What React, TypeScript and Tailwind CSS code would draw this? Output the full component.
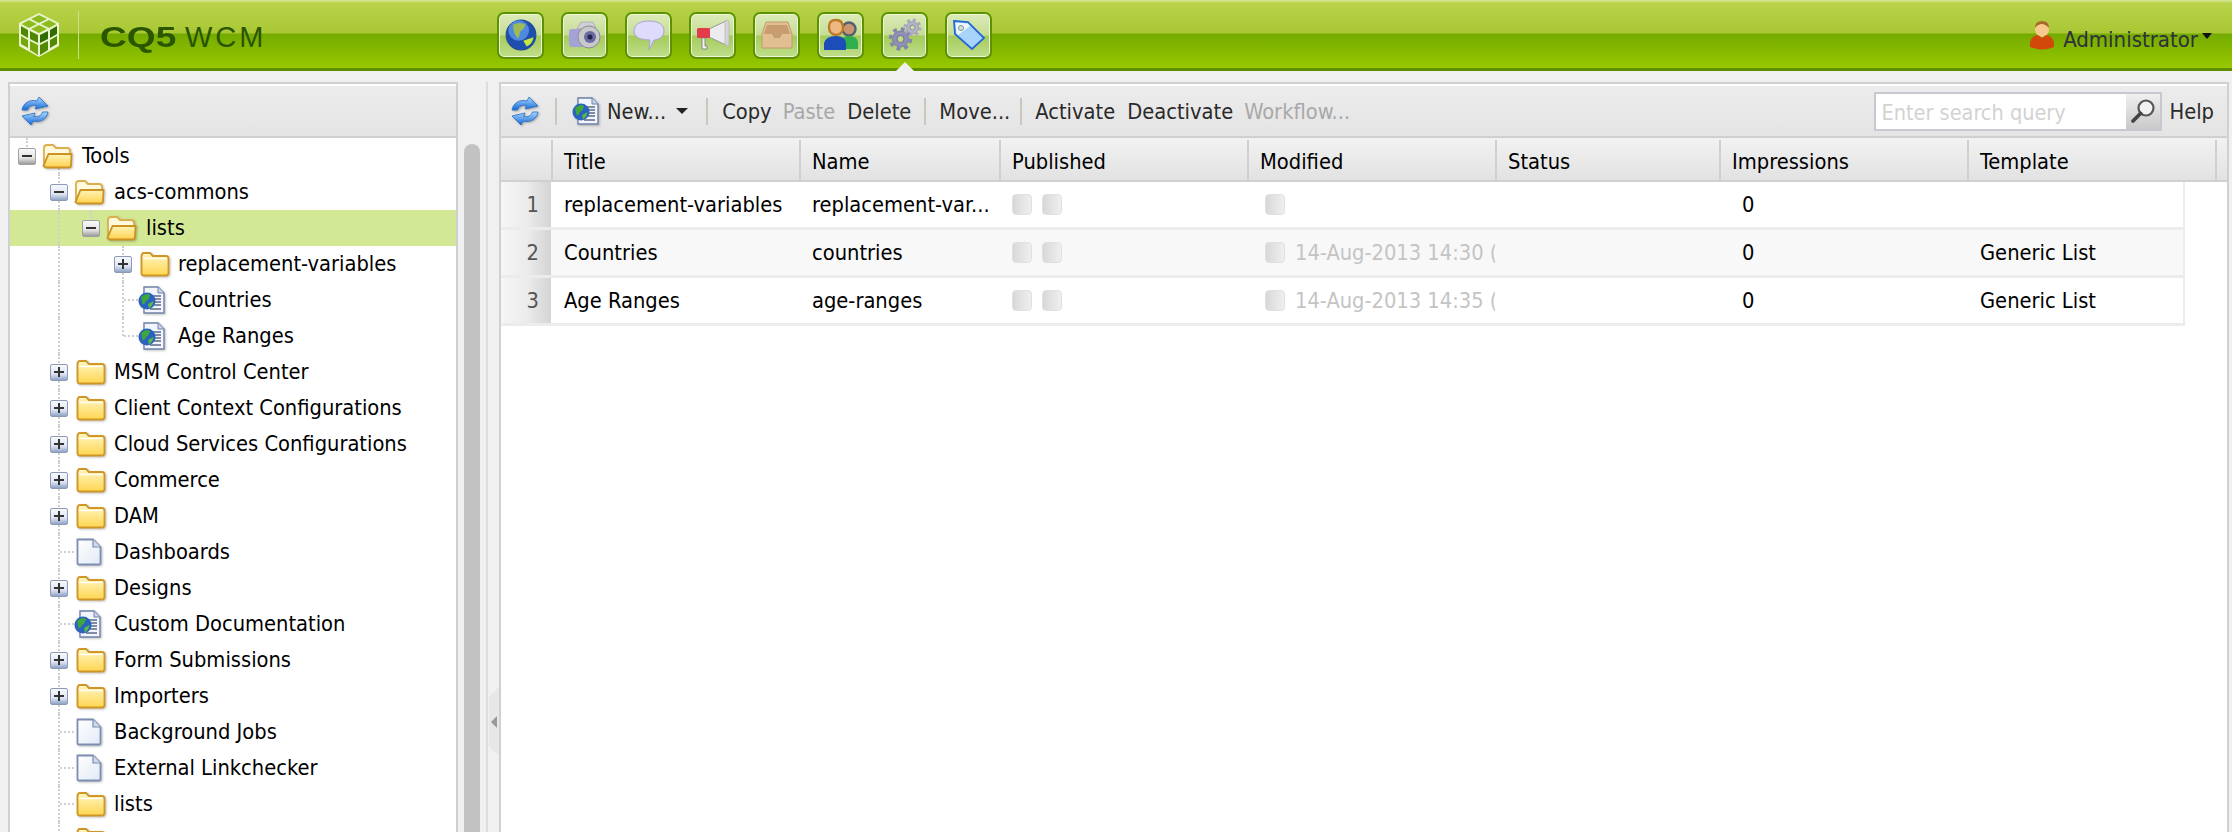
import React from "react";

const font = "font-['DejaVu_Sans_Condensed','Liberation_Sans',Arial,sans-serif]";
const softShadow = "drop-shadow-[1px_1px_1px_rgba(0,0,0,0.25)]";

function Refresh() {
  return (
    <svg width="30" height="30" viewBox="0 0 30 30" className="shrink-0 drop-shadow-[1px_1px_1px_rgba(0,0,0,0.3)]">
      <defs>
        <linearGradient id="rf" x1="0" y1="0" x2="0" y2="1">
          <stop offset="0" stopColor="#a8d8ff" />
          <stop offset="1" stopColor="#1569d8" />
        </linearGradient>
      </defs>
      <path d="M2 14 C3 7 10 3 17 5 L19 1 L28 10 L15 13 L16.500 9.500 C12 8.500 8.500 10.500 7.500 14 Z" fill="url(#rf)" stroke="#2a6cc0" strokeWidth="0.800" />
      <path d="M28 16 C27 23 20 27 13 25 L11 29 L2 20 L15 17 L13.500 20.500 C18 21.500 21.500 19.500 22.500 16 Z" fill="url(#rf)" stroke="#2a6cc0" strokeWidth="0.800" />
    </svg>
  );
}

function Folder({ open = false }: { open?: boolean }) {
  if (open)
    return (
      <svg width="31" height="26" viewBox="0 0 31 26" className={`shrink-0 ${softShadow}`}>
        <defs>
          <linearGradient id="fo" x1="0" y1="0" x2="0" y2="1">
            <stop offset="0" stopColor="#fff4b8" />
            <stop offset="1" stopColor="#ffd24f" />
          </linearGradient>
        </defs>
        <path d="M2 20 V5 Q2 2 5 2 H11 L14 5 H25 Q28 5 28 8 V11 H8 Z" fill="#fff9de" stroke="#dcae4c" strokeWidth="1.800" />
        <path d="M1.500 23 L6.500 11 H29.500 L29 22 Q29 24.500 26.500 24.500 H4 Z" fill="url(#fo)" stroke="#cb9224" strokeWidth="1.800" />
      </svg>
    );
  return (
    <svg width="30" height="26" viewBox="0 0 30 26" className={`shrink-0 ${softShadow}`}>
      <defs>
        <linearGradient id="fc" x1="0" y1="0" x2="0" y2="1">
          <stop offset="0" stopColor="#fff6c4" />
          <stop offset="1" stopColor="#ffd650" />
        </linearGradient>
      </defs>
      <path d="M1.500 22 V5 Q1.500 2 4 2 H10 L13 5 H26 Q28.500 5 28.500 8 V22 Q28.500 24.500 26 24.500 H4 Q1.500 24.500 1.500 22 Z" fill="url(#fc)" stroke="#cf9626" strokeWidth="1.800" />
      <path d="M3 7.500 H27" stroke="#fffdf0" strokeWidth="1.500" />
    </svg>
  );
}

function Globe({ size = 28 }: { size?: number }) {
  return (
    <svg width={size} height={size} viewBox="0 0 28 28" className="shrink-0">
      <circle cx="14" cy="14" r="13" fill="#1f4fae" stroke="#234c95" />
      <circle cx="12" cy="10" r="9" fill="#4f8ae0" />
      <path d="M7 5 Q13 2 18 5 Q16 10 13 11 Q13 16 11 17 Q7 12 7 5 Z" fill="#9dbb55" />
      <path d="M16 19 L25 16 Q24 22 19 24 Z" fill="#c4e83f" />
    </svg>
  );
}

function PageGlobe() {
  return (
    <svg width="28" height="28" viewBox="0 0 28 28" className={`shrink-0 ${softShadow}`}>
      <path d="M6 1 H20 L26 7 V27 H6 Z" fill="#f2f5fb" stroke="#6f82a8" strokeWidth="1.400" />
      <path d="M20 1 V7 H26" fill="#c9d4e8" stroke="#6f82a8" />
      <path d="M15 10 H23 M15 13 H23 M16 16 H23 M16 19 H23 M12 23 H23" stroke="#5d6a84" strokeWidth="1.300" />
      <circle cx="9" cy="15" r="8.500" fill="#2a62bf" />
      <path d="M3 11 Q9 6 12 9 Q11 14 8 15 Q7 19 4.500 18 Z" fill="#3fa63c" />
      <path d="M10 18 L15.500 15 Q15 20 11 22.500 Z" fill="#58b948" />
    </svg>
  );
}

function PageIcon() {
  return (
    <svg width="26" height="28" viewBox="0 0 26 28" className={`shrink-0 ${softShadow}`}>
      <defs>
        <linearGradient id="pg" x1="0" y1="0" x2="1" y2="1">
          <stop offset="0" stopColor="#ffffff" />
          <stop offset="1" stopColor="#e2eaf6" />
        </linearGradient>
      </defs>
      <path d="M1.500 1.500 H17 L24.500 9 V25.500 Q24.500 26.500 23 26.500 H3 Q1.500 26.500 1.500 25.500 Z" fill="url(#pg)" stroke="#7d8eb2" strokeWidth="1.800" />
      <path d="M17 1.500 V9 H24.500" fill="#cfd9ec" stroke="#7d8eb2" strokeWidth="1.200" />
    </svg>
  );
}

function Toggle({ open, grey }: { open: boolean; grey?: boolean }) {
  return (
    <span className={`relative flex h-[17px] w-[18px] shrink-0 items-center justify-center rounded-[2px] border ${grey ? "border-[#a0a0a0] bg-[linear-gradient(#f8f8f8,#e4e4e4_60%,#9c9c9c)]" : "border-[#8e9bb5] bg-[linear-gradient(#f6f8fc,#dfe6f2_60%,#8fa3c6)]"}`}>
      <span className="absolute h-[2px] w-[10px] bg-[#333]" />
      {!open && <span className="absolute h-[10px] w-[2px] bg-[#333]" />}
    </span>
  );
}

type Row = { label: string; level: number; kind: "folder" | "open" | "page" | "web"; toggle?: "plus" | "minus" | "minusgrey"; sel?: boolean; guide?: "top" | "full" | "half"; };

const rows: Row[] = [
  { label: "Tools", level: 0, kind: "open", toggle: "minusgrey" },
  { label: "acs-commons", level: 1, kind: "open", toggle: "minus" },
  { label: "lists", level: 2, kind: "open", toggle: "minusgrey", sel: true },
  { label: "replacement-variables", level: 3, kind: "folder", toggle: "plus", guide: "full" },
  { label: "Countries", level: 3, kind: "web", guide: "full" },
  { label: "Age Ranges", level: 3, kind: "web", guide: "half" },
  { label: "MSM Control Center", level: 1, kind: "folder", toggle: "plus" },
  { label: "Client Context Configurations", level: 1, kind: "folder", toggle: "plus" },
  { label: "Cloud Services Configurations", level: 1, kind: "folder", toggle: "plus" },
  { label: "Commerce", level: 1, kind: "folder", toggle: "plus" },
  { label: "DAM", level: 1, kind: "folder", toggle: "plus" },
  { label: "Dashboards", level: 1, kind: "page" },
  { label: "Designs", level: 1, kind: "folder", toggle: "plus" },
  { label: "Custom Documentation", level: 1, kind: "web" },
  { label: "Form Submissions", level: 1, kind: "folder", toggle: "plus" },
  { label: "Importers", level: 1, kind: "folder", toggle: "plus" },
  { label: "Background Jobs", level: 1, kind: "page" },
  { label: "External Linkchecker", level: 1, kind: "page" },
  { label: "lists", level: 1, kind: "folder" },
  { label: "", level: 1, kind: "folder" },
];

const indentClass = ["pl-[8px]", "pl-[40px]", "pl-[72px]", "pl-[104px]"];
const guideColor = "border-dotted border-[#cfcfcf]";

function TreeRow({ r, i }: { r: Row; i: number }) {
  return (
    <div className={`relative flex h-[36px] shrink-0 items-center ${indentClass[r.level]} ${r.sel ? "bg-[#d3e895]" : ""}`}>
      {i === 0 && <span className={`absolute left-[16px] top-0 h-[12px] border-l-2 ${guideColor}`} />}
      {i === 0 && <span className={`absolute left-[48px] top-[30px] h-[6px] border-l-2 ${guideColor}`} />}
      {r.level >= 1 && <span className={`absolute left-[48px] top-0 h-full border-l-2 ${guideColor}`} />}
      {r.sel && <span className={`absolute left-[80px] top-0 h-[12px] border-l-2 ${guideColor}`} />}
      {r.guide === "full" && <span className={`absolute left-[112px] top-0 h-full border-l-2 ${guideColor}`} />}
      {r.guide === "half" && <span className={`absolute left-[112px] top-0 h-[18px] border-l-2 ${guideColor}`} />}
      <span className="flex w-[18px] shrink-0 items-center justify-start">
        {r.toggle ? (
          <Toggle open={r.toggle !== "plus"} grey={r.toggle === "minusgrey"} />
        ) : (
          <span className="ml-[10px] w-[14px] shrink-0 border-t-2 border-dotted border-[#cfcfcf]" />
        )}
      </span>
      <span className="relative ml-[6px] flex w-[34px] shrink-0 items-center">
        {r.kind === "open" && <Folder open />}
        {r.kind === "folder" && <span className="ml-[2px] flex"><Folder /></span>}
        {r.kind === "page" && <span className="ml-[2px] flex"><PageIcon /></span>}
        {r.kind === "web" && <PageGlobe />}
      </span>
      <span className="relative ml-[6px] whitespace-nowrap text-[21.7px] text-black">{r.label}</span>
    </div>
  );
}

function HeaderBtn({ children, active }: { children: React.ReactNode; active?: boolean }) {
  return (
    <div className="relative flex h-[47px] w-[47px] shrink-0 items-center justify-center rounded-[7px] border-2 border-[#5d9300] bg-[linear-gradient(#dcebb8,#c6dd95_48%,#a5cb5c_52%,#c0de8c)] shadow-[inset_0_0_0_1px_#eef6d6]">
      {children}
      {active && (
        <span className="absolute -bottom-[14px] left-1/2 h-0 w-0 -translate-x-1/2 border-x-[9px] border-b-[9px] border-x-transparent border-b-[#f0f0f0]" />
      )}
    </div>
  );
}

function Sep({ l = 13, r = 14 }: { l?: number; r?: number }) {
  return <span style={{ marginLeft: l, marginRight: r }} className="h-[27px] w-[2px] shrink-0 bg-[#c8c8be]" />;
}

function Tb({ t, off, cls = "" }: { t: string; off?: boolean; cls?: string }) {
  return <span className={`whitespace-nowrap pt-[2px] text-[21.7px] ${off ? "text-[#a8a8a8]" : "text-[#2a2a2a]"} ${cls}`}>{t}</span>;
}

const colClass = ["w-[248px]", "w-[200px]", "w-[248px]", "w-[248px]", "w-[224px]", "w-[248px]", "w-[248px]"];
const headers = ["Title", "Name", "Published", "Modified", "Status", "Impressions", "Template"];

const Check = () => <span className="h-[21px] w-[20px] shrink-0 rounded-[4px] border border-[#e0e0e0] bg-gradient-to-r from-[#d8d8d8] to-[#efefef]" />;

const data = [
  ["replacement-variables", "replacement-var...", "", "0", ""],
  ["Countries", "countries", "14-Aug-2013 14:30 (", "0", "Generic List"],
  ["Age Ranges", "age-ranges", "14-Aug-2013 14:35 (", "0", "Generic List"],
];

export default function App() {
  return (
    <div className={`${font} flex h-[832px] w-[2232px] flex-col overflow-hidden bg-[#f0f0f0]`}>
      {/* Top bar */}
      <header className="flex h-[71px] shrink-0 items-center border-b-[3px] border-[#5f8f00] bg-[linear-gradient(#d8e8a0_0,#b9d24a_3px,#a9c834_33px,#74ab00_34px,#98c800_100%)] pt-[2px]">
        <div className="flex w-[497px] shrink-0 items-center pl-[18px]">
          <svg width="42" height="46" viewBox="0 0 42 46" className="shrink-0">
            <path d="M21 1 L41 11 V34 L21 45 L1 34 V11 Z" fill="#eaf4cf" />
            <g fill="#8dbb1e">
              <path d="M21 3 L29 7 L21 11 L13 7 Z" />
              <path d="M11 8 L19 12 L11 16 L3.500 12 Z" />
              <path d="M31 8 L38.500 12 L31 16 L23 12 Z" />
              <path d="M21 13 L29 17 L21 21 L13 17 Z" />
            </g>
            <g fill="#4d8800">
              <path d="M3 14 L10 18 V26 L3 22 Z" />
              <path d="M12 19 L20 23 V31 L12 27 Z" />
              <path d="M3 24 L10 28 V36 L3 32 Z" fill="#74a80c" />
              <path d="M12 29 L20 33 V43 L12 38 Z" fill="#74a80c" />
            </g>
            <g fill="#2f6d00">
              <path d="M39 14 L32 18 V26 L39 22 Z" />
              <path d="M30 19 L22 23 V31 L30 27 Z" />
              <path d="M39 24 L32 28 V36 L39 32 Z" fill="#4f8a00" />
              <path d="M30 29 L22 33 V43 L30 38 Z" fill="#4f8a00" />
            </g>
          </svg>
          <span className="ml-[18px] h-[48px] w-[1px] bg-[#c9de8b]" />
          <span className="ml-[21px] mt-[4px] flex items-baseline whitespace-nowrap font-['Liberation_Sans',Arial,sans-serif] text-[29px] leading-none text-[#2b5600]">
            <span className="inline-block w-[85px] origin-left scale-x-[1.28] font-bold">CQ5</span>
            <span className="tracking-[3px]">WCM</span>
          </span>
        </div>
        <nav className="flex gap-[17px]">
          <HeaderBtn><Globe size={32} /></HeaderBtn>
          <HeaderBtn>
            <svg width="34" height="30" viewBox="0 0 34 30">
              <rect x="1" y="9" width="20" height="18" rx="3" fill="#a5a2d8" />
              <path d="M9 9 L13 2 H25 L28 8 Z" fill="#d0ced6" stroke="#9a9aa4" strokeWidth="0.600" />
              <circle cx="21" cy="17" r="11" fill="#c8c8cc" stroke="#8b8b95" />
              <circle cx="22" cy="17" r="6" fill="#6a6aa0" />
              <circle cx="22" cy="17" r="2.500" fill="#24244d" />
            </svg>
          </HeaderBtn>
          <HeaderBtn>
            <svg width="32" height="32" viewBox="0 0 32 32">
              <path d="M16 2 C26 2 31 6 31 12 C31 18 25 21 21 21 L16 31 L17 21 C7 21 1 18 1 12 C1 6 6 2 16 2 Z" fill="#dedbfc" stroke="#a7a3d3" />
            </svg>
          </HeaderBtn>
          <HeaderBtn>
            <svg width="34" height="32" viewBox="0 0 34 32">
              <path d="M13 10 L30 2 V26 L13 18 Z" fill="#ececee" stroke="#9a9aa0" />
              <rect x="1" y="9" width="13" height="10" rx="1.500" fill="#e23c4a" />
              <path d="M6 19 V30 H11 V27 H9 V19 Z" fill="#f2f2f2" stroke="#777" strokeWidth="0.800" />
              <rect x="29" y="1" width="4" height="26" rx="2" fill="#d5d5d8" stroke="#a0a0a6" strokeWidth="0.500" />
            </svg>
          </HeaderBtn>
          <HeaderBtn>
            <svg width="32" height="28" viewBox="0 0 32 28">
              <path d="M5 1 H27 L31 13 V27 H1 V13 Z" fill="#e2bf93" stroke="#c39a6c" />
              <path d="M6 4 H26 L29 13 H21 L19 17 H13 L11 13 H3 Z" fill="#c79c6e" />
            </svg>
          </HeaderBtn>
          <HeaderBtn>
            <svg width="36" height="34" viewBox="0 0 36 34">
              <circle cx="26" cy="11" r="6.500" fill="#c89572" stroke="#54606e" strokeWidth="2.400" />
              <path d="M18 31 V24 Q19 18 26 18 Q34 18 35 24 V31 Z" fill="#2fae4d" />
              <path d="M6 9 Q6 2 13 2 Q20 2 20 10 Q20 16 13 17 Q6 16 6 9 Z" fill="#ecb983" stroke="#bd7a28" strokeWidth="2.400" />
              <path d="M1 32 V25 Q3 18 13 18 Q22 18 23 25 V32 Z" fill="#1c4db8" />
            </svg>
          </HeaderBtn>
          <HeaderBtn active>
            <svg width="34" height="34" viewBox="0 0 34 34">
              <circle cx="12.500" cy="21" r="8" fill="#9090b6" stroke="#8080a6" strokeWidth="1" />
              <circle cx="12.500" cy="21" r="10" fill="none" stroke="#8585ab" strokeWidth="3.500" strokeDasharray="3.900 3.950" />
              <circle cx="12.500" cy="21" r="3.500" fill="#c3d98c" stroke="#6f6f92" />
              <circle cx="24.500" cy="9.500" r="6" fill="#b4b4c8" stroke="#9a9ab0" strokeWidth="1" />
              <circle cx="24.500" cy="9.500" r="7.500" fill="none" stroke="#a8a8bf" strokeWidth="3" strokeDasharray="3 2.900" />
              <circle cx="24.500" cy="9.500" r="2.500" fill="#cfe09c" stroke="#8a8aa2" />
            </svg>
          </HeaderBtn>
          <HeaderBtn>
            <svg width="34" height="32" viewBox="0 0 34 32">
              <path d="M2 2 L16 3 L32 19 L20 30 L3 15 Z" fill="#a9d4fa" stroke="#2569d4" strokeWidth="1.800" />
              <path d="M3.500 3.500 L15.500 4.500 L18 7 L6 16 L4.500 14.500 Z" fill="#eef6fd" />
              <circle cx="9" cy="9" r="2.500" fill="#dbe4c8" stroke="#7f90a6" />
            </svg>
          </HeaderBtn>
        </nav>
        <div className="ml-auto mr-[20px] flex items-center pt-[6px]">
          <svg width="26" height="31" viewBox="0 0 26 31" className="-mt-[6px] shrink-0">
            <ellipse cx="13" cy="9" rx="7" ry="8" fill="#f7c98c" />
            <path d="M6 8 Q6 1 13 1 Q20 1 20 8 Q16 4 13 4 Q9 4 6 8 Z" fill="#a56a28" />
            <path d="M1 27 Q0 16 9 15 L13 18 L17 15 Q26 16 25 27 Q13 32 1 27 Z" fill="#d1480a" />
          </svg>
          <span className="ml-[8px] whitespace-nowrap pt-[2px] text-[22px] text-[#2f2f3e]">Administrator</span>
          <span className="-mt-[4px] ml-[4px] h-0 w-0 border-x-[5px] border-t-[6px] border-x-transparent border-t-[#111]" />
        </div>
      </header>

      {/* Body */}
      <main className="flex min-h-0 flex-1 pl-[8px] pr-[3px] pt-[11px]">
        {/* Left panel */}
        <section className="flex w-[450px] shrink-0 flex-col overflow-hidden border-2 border-b-0 border-[#d0d0d0]">
          <div className="flex h-[54px] shrink-0 items-center border-t-2 border-b-2 border-t-white border-b-[#d0d0d0] bg-gradient-to-b from-[#ececec] to-[#e4e4e4] pl-[10px]">
            <Refresh />
          </div>
          <div className="flex min-h-0 flex-1 flex-col overflow-hidden bg-white">
            {rows.map((r, i) => (
              <TreeRow key={i} r={r} i={i} />
            ))}
          </div>
        </section>

        {/* Scrollbar */}
        <div className="flex w-[28px] shrink-0 pl-[6px] pt-[62px]">
          <div className="h-full w-[16px] rounded-t-[8px] bg-[#c2c2c2]" />
        </div>

        {/* Splitter */}
        <div className="w-[13px] shrink-0 border-l-2 border-[#dcdcdc] pl-[1px] pt-[605px]">
          <span className="flex h-[69px] w-full items-center justify-center bg-[#e7e7e7] [clip-path:polygon(0_14%,100%_0,100%_100%,0_86%)]">
            <span className="h-0 w-0 border-y-[6px] border-r-[6px] border-y-transparent border-r-[#999]" />
          </span>
        </div>

        {/* Right panel */}
        <section className="flex min-w-0 flex-1 flex-col overflow-hidden border-2 border-b-0 border-[#d0d0d0]">
          <div className="flex h-[54px] shrink-0 items-center border-t-2 border-b-2 border-t-white border-b-[#d0d0d0] bg-gradient-to-b from-[#ececec] to-[#e4e4e4] pl-[9px]">
            <Refresh />
            <Sep l={15} r={15} />
            <PageGlobe />
            <Tb t="New..." cls="ml-[7px]" />
            <span className="ml-[10px] h-0 w-0 border-x-[6px] border-t-[6px] border-x-transparent border-t-[#222]" />
            <Sep l={18} r={14} />
            <Tb t="Copy" />
            <Tb t="Paste" off cls="ml-[11px]" />
            <Tb t="Delete" cls="ml-[12px]" />
            <Sep r={13} />
            <Tb t="Move..." />
            <Sep l={10} r={13} />
            <Tb t="Activate" />
            <Tb t="Deactivate" cls="ml-[12px]" />
            <Tb t="Workflow..." off cls="ml-[11px]" />
            <div className="ml-auto flex h-[39px] w-[288px] items-stretch border-2 border-[#c8c8d0] bg-white">
              <span className="flex-1 overflow-hidden whitespace-nowrap pl-[6px] pt-[1px] text-[21.5px] leading-[35px] text-[#d2d2d2]">Enter search query</span>
              <span className="flex w-[34px] items-center justify-center bg-gradient-to-b from-[#f0f0f0] to-[#c9c9c9]">
                <svg width="26" height="26" viewBox="0 0 26 26">
                  <circle cx="16" cy="10" r="7.500" fill="#f2f2f2" stroke="#555" strokeWidth="2.200" />
                  <path d="M10.500 15.500 L3 23" stroke="#444" strokeWidth="3.800" strokeLinecap="round" />
                </svg>
              </span>
            </div>
            <Tb t="Help" cls="ml-[8px] mr-[13px]" />
          </div>
          <div className="flex min-h-0 flex-1 flex-col bg-white">
            <div className="flex h-[44px] shrink-0 border-b-2 border-[#d0d0d0] bg-gradient-to-b from-[#f2f2f2] to-[#e2e2e2] pt-[2px]">
              <div className="w-[50px] shrink-0" />
              {headers.map((h, i) => (
                <div key={h} className={`${colClass[i]} flex shrink-0 items-center border-l-2 border-[#d0d0d0] pl-[11px] pt-[4px] text-[21.7px] text-black`}>
                  {h}
                </div>
              ))}
              <div className="flex-1 border-l-2 border-[#d0d0d0]" />
            </div>
            {data.map((d, i) => (
              <div key={i} className={`flex h-[48px] w-[1684px] shrink-0 items-center border-b-[3px] border-r-2 border-[#ececec] ${i === 1 ? "bg-[#f8f8f8]" : "bg-white"}`}>
                <div className="flex h-full w-[50px] shrink-0 items-center justify-end bg-gradient-to-r from-[#f6f6f6] via-[#ececec] to-[#d4d4d4] pr-[12px] pt-[2px] text-[21.7px] text-[#555]">{i + 1}</div>
                <div className="w-[248px] shrink-0 whitespace-nowrap pl-[13px] pt-[2px] text-[21.7px] text-black">{d[0]}</div>
                <div className="w-[200px] shrink-0 whitespace-nowrap pl-[13px] pt-[2px] text-[21.7px] text-black">{d[1]}</div>
                <div className="flex w-[248px] shrink-0 gap-[10px] pl-[13px]"><Check /><Check /></div>
                <div className="flex w-[248px] shrink-0 items-center gap-[10px] overflow-hidden whitespace-nowrap pl-[18px] text-[21.7px] text-[#c4c4c4]"><Check /><span className="pt-[2px]">{d[2]}</span></div>
                <div className="w-[224px] shrink-0" />
                <div className="w-[248px] shrink-0 whitespace-nowrap pl-[23px] pt-[2px] text-[21.7px] text-black">{d[3]}</div>
                <div className="min-w-0 flex-1 whitespace-nowrap pl-[13px] pt-[2px] text-[21.7px] text-black">{d[4]}</div>
              </div>
            ))}
          </div>
        </section>
      </main>
    </div>
  );
}
